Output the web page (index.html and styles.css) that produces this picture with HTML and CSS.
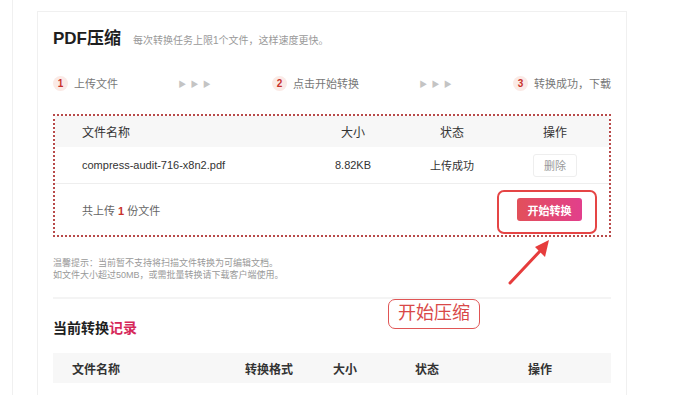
FILE: index.html
```html
<!DOCTYPE html>
<html lang="zh-CN">
<head>
    <meta charset="UTF-8">
    <title>PDF压缩</title>
    <link rel="stylesheet" href="styles.css">
</head>
<body>
    <div class="side"></div>
    <div class="card">
        <div class="head">
            <h1 class="title">PDF压缩</h1>
            <span class="subtitle">每次转换任务上限1个文件，这样速度更快。</span>
        </div>

        <div class="steps">
            <div class="step"><span class="num">1</span>上传文件</div>
            <div class="arrows">▶ ▶ ▶</div>
            <div class="step"><span class="num">2</span>点击开始转换</div>
            <div class="arrows">▶ ▶ ▶</div>
            <div class="step"><span class="num">3</span>转换成功，下载</div>
        </div>

        <div class="upload">
            <div class="row row-head">
                <div class="c-name">文件名称</div>
                <div class="c-mid">大小</div>
                <div class="c-mid">状态</div>
                <div class="c-mid">操作</div>
            </div>
            <div class="row row-file">
                <div class="c-name">compress-audit-716-x8n2.pdf</div>
                <div class="c-mid">8.82KB</div>
                <div class="c-mid">上传成功</div>
                <div class="c-mid"><button class="btn-del">删除</button></div>
            </div>
            <div class="foot">
                <div class="count">共上传 <b>1</b> 份文件</div>
                <div class="start-wrap">
                    <button class="btn-start">开始转换</button>
                    <span class="mark-box"></span>
                </div>
            </div>
        </div>

        <div class="tips">
            <p>温馨提示：当前暂不支持将扫描文件转换为可编辑文档。</p>
            <p>如文件大小超过50MB，或需批量转换请下载客户端使用。</p>
        </div>

        <div class="divider"></div>

        <h2 class="record-title">当前转换<span>记录</span></h2>

        <div class="record-head">
            <div>文件名称</div>
            <div>转换格式</div>
            <div>大小</div>
            <div>状态</div>
            <div>操作</div>
        </div>

        <!-- annotations drawn over the screenshot -->
        <svg class="mark-arrow" width="50" height="52" viewBox="0 0 50 52">
            <line x1="5" y1="46" x2="36" y2="13" stroke="#e63c3c" stroke-width="3" stroke-linecap="round"/>
            <polygon points="44,3 30,10 40,20" fill="#e63c3c"/>
        </svg>
        <div class="mark-label">开始压缩</div>
    </div>
</body>
</html>
```

FILE: styles.css
```css
* {
    margin: 0;
    padding: 0;
    box-sizing: border-box;
}
html, body {
    height: 100%;
    background-color: #fff;
    color: #333;
    font-family: "Liberation Sans", "Noto Sans CJK SC", sans-serif;
}
body {
    display: flex;
    overflow: hidden;
}
.side {
    width: 13px;
    border-right: 1px solid #f0f0f0;
    flex-shrink: 0;
}
.card {
    position: relative;
    margin-top: 11px;
    margin-left: 24px;
    width: 590px;
    border: 1px solid #f0f0f0;
    border-bottom: none;
    padding: 15px 15px 0;
}
.head {
    display: flex;
    align-items: baseline;
    gap: 12px;
    height: 24px;
}
.title {
    font-size: 17px;
    font-weight: bold;
    color: #1e1e1e;
    line-height: 24px;
}
.subtitle {
    font-size: 10px;
    color: #999;
}
.steps {
    display: flex;
    justify-content: space-between;
    align-items: center;
    margin-top: 20px;
    height: 24px;
    font-size: 11px;
    color: #777;
}
.step {
    display: flex;
    align-items: center;
    gap: 6px;
}
.num {
    width: 15px;
    height: 15px;
    border-radius: 50%;
    background-color: #fbeae6;
    color: #c8322c;
    font-weight: bold;
    font-size: 10px;
    display: flex;
    justify-content: center;
    align-items: center;
}
.arrows {
    color: #c4c4c4;
    font-size: 8px;
    letter-spacing: 1px;
}
.upload {
    margin-top: 19px;
    border: 2px dotted #b84a4a;
    font-size: 11px;
}
.row {
    display: grid;
    grid-template-columns: 248px 100px 98px 1fr;
    align-items: center;
}
.row-head {
    height: 31px;
    background-color: #f7f7f7;
    font-size: 12px;
    color: #333;
}
.row-file {
    height: 37px;
    border-bottom: 1px solid #eee;
    color: #333;
}
.c-name {
    padding-left: 27px;
}
.c-mid {
    text-align: center;
}
.btn-del {
    width: 44px;
    height: 23px;
    border: 1px solid #eee;
    border-radius: 3px;
    background: #fff;
    color: #999;
    font-family: inherit;
    font-size: 11px;
}
.foot {
    display: flex;
    justify-content: space-between;
    align-items: center;
    height: 51px;
    padding: 0 27px;
    color: #666;
}
.count b {
    color: #c8322c;
}
.start-wrap {
    position: relative;
    display: flex;
}
.btn-start {
    width: 65px;
    height: 23px;
    border: none;
    border-radius: 3px;
    background: linear-gradient(90deg, #e2505a, #e23f8c);
    color: #fff;
    font-family: inherit;
    font-weight: bold;
    font-size: 11px;
}
.mark-box {
    position: absolute;
    left: -20px;
    right: -15px;
    top: -8px;
    bottom: -13px;
    border: 2px solid #e54545;
    border-radius: 7px;
}
.tips {
    margin-top: 20px;
    font-size: 9px;
    line-height: 12px;
    color: #999;
}
.divider {
    margin-top: 16px;
    height: 2px;
    background-color: #f4f4f4;
}
.record-title {
    margin-top: 19px;
    font-size: 14px;
    font-weight: bold;
    line-height: 20px;
    color: #1e1e1e;
}
.record-title span {
    color: #d6285a;
}
.record-head {
    display: grid;
    grid-template-columns: 173px 88px 82px 113px 1fr;
    align-items: center;
    margin-top: 15px;
    height: 30px;
    padding-left: 19px;
    background-color: #f7f7f7;
    font-size: 12px;
    font-weight: bold;
    color: #333;
}
.mark-arrow {
    position: absolute;
    left: 467px;
    top: 225px;
}
.mark-label {
    position: absolute;
    left: 350px;
    top: 287px;
    width: 92px;
    height: 30px;
    border: 1.5px solid #e05555;
    border-radius: 7px;
    background-color: #fff;
    color: #d94848;
    font-size: 18px;
    line-height: 27px;
    text-align: center;
}
```
